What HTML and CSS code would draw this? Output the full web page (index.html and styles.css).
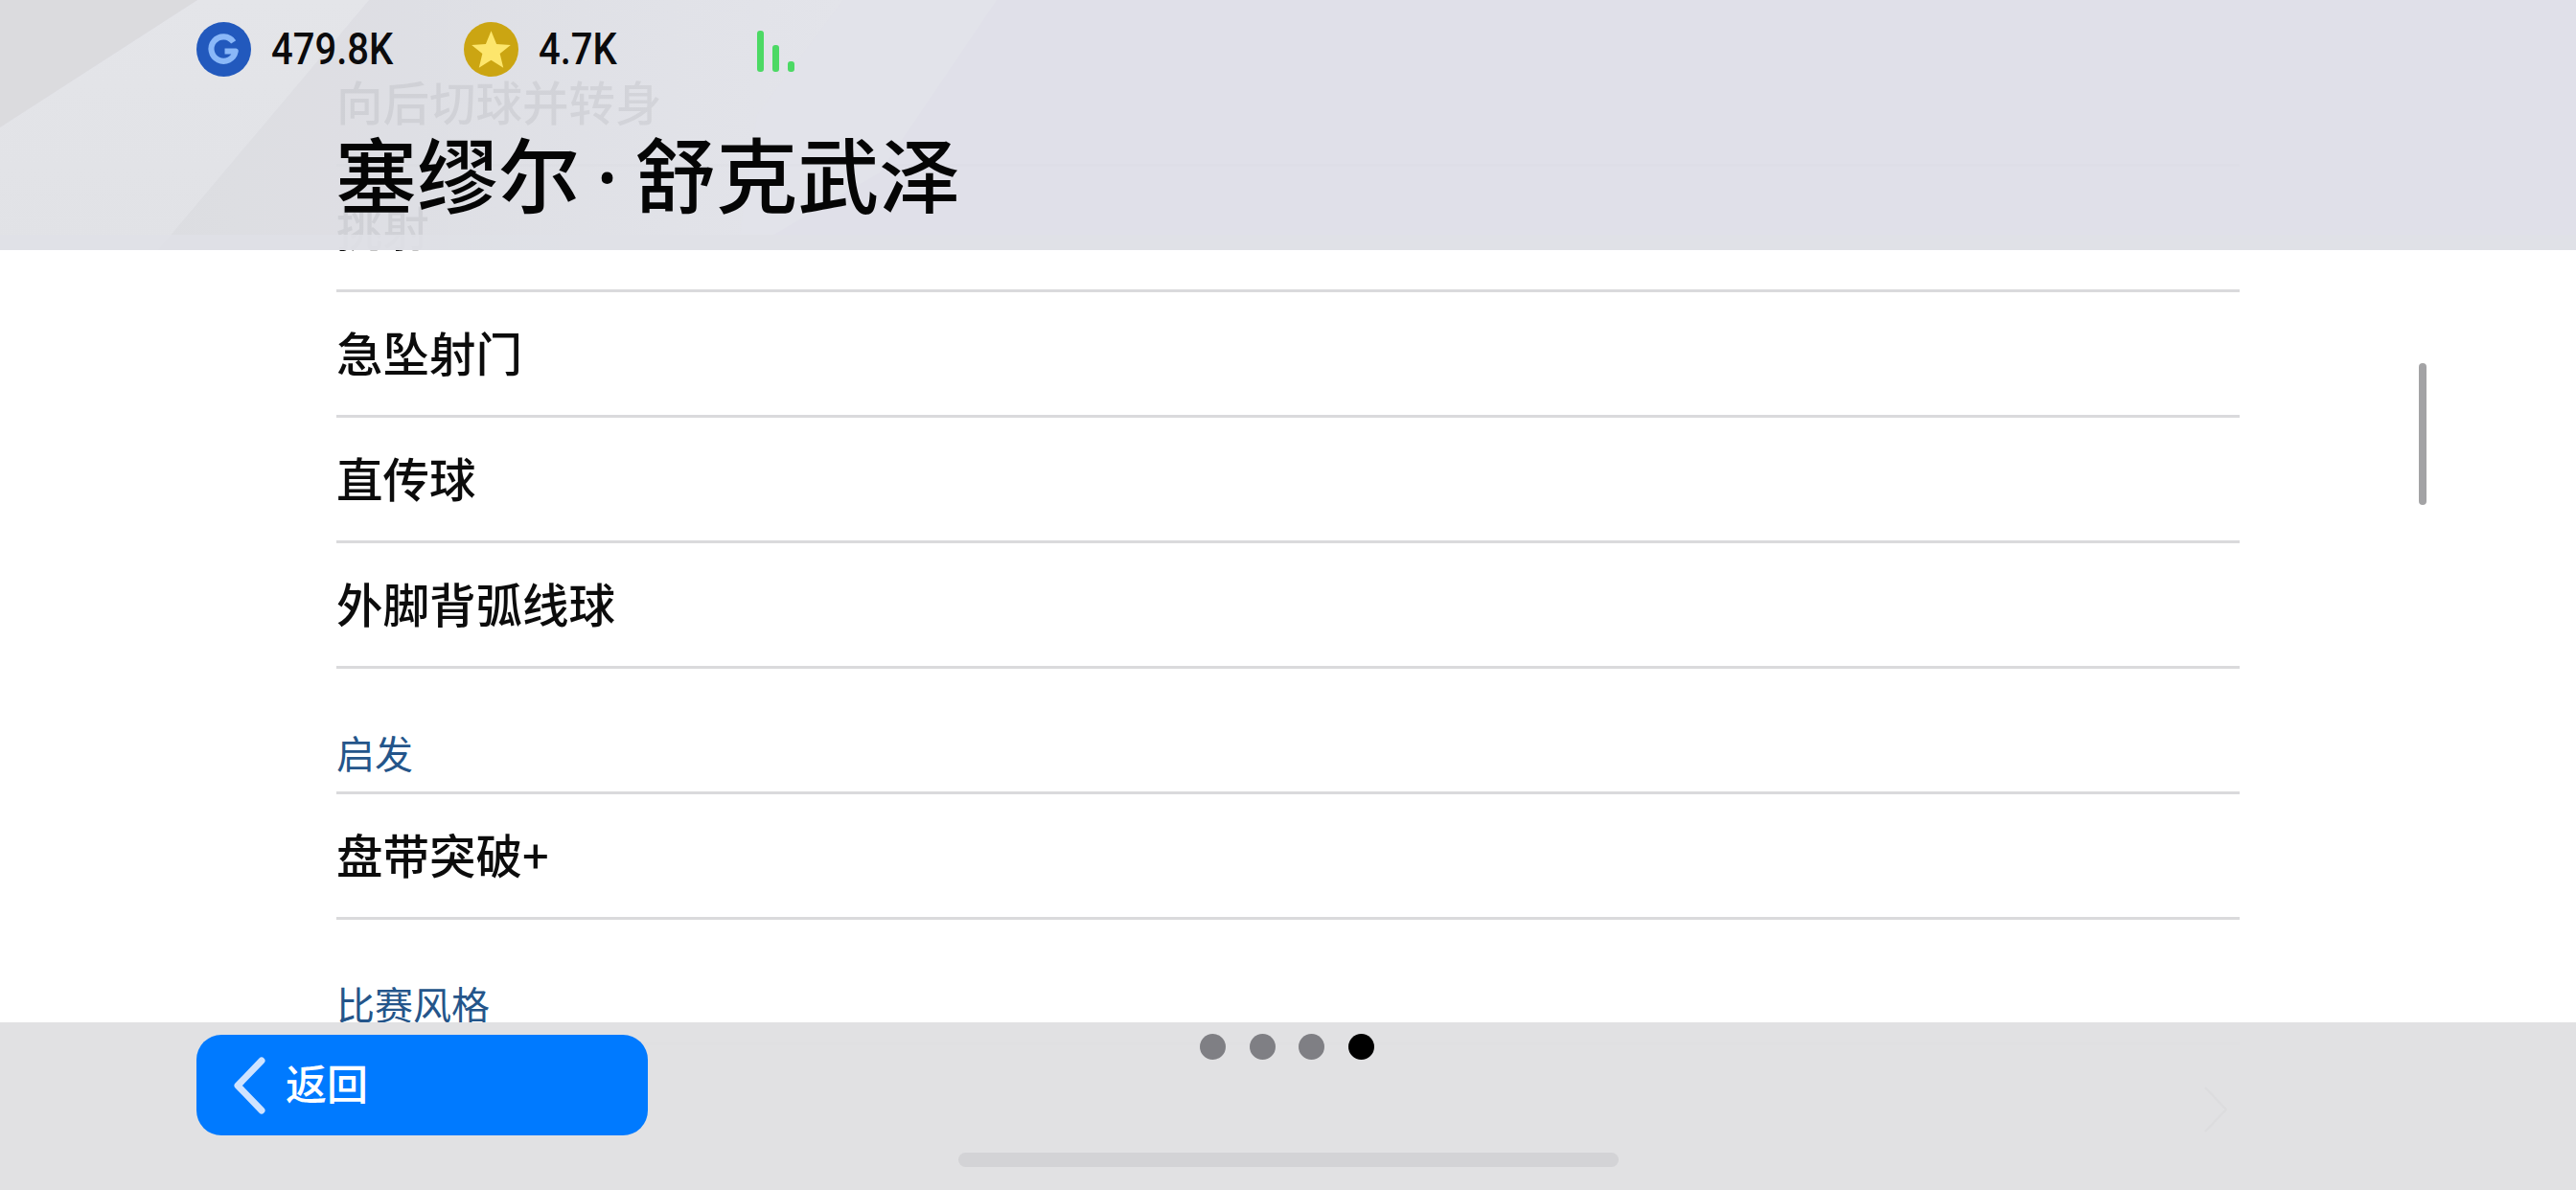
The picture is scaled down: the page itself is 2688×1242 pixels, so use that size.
FILE: index.html
```html
<!DOCTYPE html>
<html lang="zh-CN">
<head>
<meta charset="utf-8">
<title>塞缪尔·舒克武泽</title>
<link rel="stylesheet" href="styles.css">
</head>
<body>
<div class="app">
  <main class="list">
    <div class="row">向后切球并转身</div>
    <div class="row">挑射</div>
    <div class="row">急坠射门</div>
    <div class="row">直传球</div>
    <div class="row">外脚背弧线球</div>
    <div class="row heading">启发</div>
    <div class="row">盘带突破+</div>
    <div class="row heading">比赛风格</div>
  </main>
  <div class="scrollbar"></div>

  <header class="top">
    <svg class="top-bg" viewBox="0 0 2688 261" preserveAspectRatio="none" aria-hidden="true">
      <defs>
        <linearGradient id="mid" x1="0" x2="1" y1="0" y2="0">
          <stop offset="0" stop-color="#dadbe0"/>
          <stop offset="1" stop-color="#e2e3e9"/>
        </linearGradient>
        <linearGradient id="band" x1="0" x2="0" y1="0" y2="1">
          <stop offset="0" stop-color="#e3e4e8"/>
          <stop offset="1" stop-color="#e0e1e5"/>
        </linearGradient>
      </defs>
      <rect width="2688" height="261" fill="#dfdfe8"/>
      <polygon points="160,261 385,0 880,0 790,120 770,261" fill="url(#mid)"/>
      <polygon points="0,133 206,0 385,0 165,261 0,261" fill="url(#band)"/>
      <polygon points="0,0 206,0 0,133" fill="#d9d9dd"/>
      <polygon points="880,0 1040,0 918,180 780,261 770,261 790,120" fill="#e1e2e9"/>
    </svg>
    <div class="stats">
      <div class="stat">
        <svg class="coin" viewBox="0 0 56 56" aria-hidden="true">
          <circle cx="28" cy="28" r="28" fill="#2259bd"/>
          <path d="M38 20.5A12.5 12.5 0 1 0 40 30H29" fill="none" stroke="#8ab8f8" stroke-width="6" stroke-linejoin="round"/>
        </svg>
        <span class="stat-value">479.8K</span>
      </div>
      <div class="stat stat-gold">
        <svg class="coin" viewBox="0 0 56 56" aria-hidden="true">
          <circle cx="28" cy="28" r="28" fill="#cba512"/>
          <polygon points="28,9 33.5,22.5 48,23.5 37,32.5 40.5,47 28,39 15.5,47 19,32.5 8,23.5 22.500,22.500" fill="#fde66c"/>
        </svg>
        <span class="stat-value">4.7K</span>
      </div>
      <div class="signal" aria-hidden="true">
        <span class="bar bar-1"></span>
        <span class="bar bar-2"></span>
        <span class="bar bar-3"></span>
      </div>
    </div>
    <h1 class="title">塞缪尔<span class="title-dot">·</span>舒克武泽</h1>
  </header>

  <footer class="bottom">
    <button class="back" type="button">
      <svg class="back-icon" viewBox="0 0 34 60" aria-hidden="true">
        <path d="M30 4 5 30 30 56" fill="none" stroke="#cfe3ff" stroke-width="7" stroke-linecap="round" stroke-linejoin="round"/>
      </svg>
      <span>返回</span>
    </button>
    <div class="dots" aria-hidden="true">
      <span class="dot"></span>
      <span class="dot"></span>
      <span class="dot"></span>
      <span class="dot dot-on"></span>
    </div>
    <svg class="next" viewBox="0 0 28 50" aria-hidden="true">
      <path d="M3 2 25 25 3 48" fill="none" stroke="#dcdcde" stroke-width="2"/>
    </svg>
    <div class="home"></div>
  </footer>
</div>
</body>
</html>
```
FILE: styles.css
```css
* { box-sizing: border-box; }
html, body { margin: 0; padding: 0; }
body {
  width: 2688px;
  height: 1242px;
  overflow: hidden;
  background: #fff;
  font-family: "Noto Sans CJK SC", "Noto Sans", sans-serif;
}
.app {
  position: relative;
  width: 2688px;
  height: 1242px;
  overflow: hidden;
  background: #fff;
}
.list {
  width: 1986px;
  margin-left: 351px;
  padding-top: 43px;
}
.row {
  height: 131px;
  padding-top: 30px;
  border-bottom: 3px solid #dadadc;
  font-size: 48.5px;
  line-height: 64px;
  font-weight: 500;
  color: #0c0c0c;
}
.row.heading {
  padding-top: 59px;
  font-size: 40px;
  line-height: 56px;
  font-weight: 400;
  color: #24558a;
}
.scrollbar {
  position: absolute;
  left: 2524px;
  top: 379px;
  width: 8px;
  height: 148px;
  border-radius: 4px;
  background: #a3a3a5;
}

/* Translucent header: the scrolled list shows faintly through it */
.top {
  position: absolute;
  left: 0;
  top: 0;
  width: 100%;
  height: 261px;
  padding: 23px 0 0 205px;
}
.top::before {
  content: "";
  position: absolute;
  left: 0;
  right: 0;
  bottom: 0;
  z-index: 1;
  height: 16px;
  background: rgba(223, 224, 230, .85);
}
.top-bg {
  position: absolute;
  inset: 0;
  width: 100%;
  height: 100%;
  opacity: .94;
}
.stats {
  position: relative;
  display: flex;
  align-items: center;
  height: 57px;
}
.stat {
  display: flex;
  align-items: center;
  gap: 21px;
  width: 279px;
}
.stat-gold { width: 306px; }
.coin {
  width: 57px;
  height: 57px;
  flex: none;
}
.stat-value {
  font-family: Roboto, "Liberation Sans", sans-serif;
  font-size: 40px;
  font-weight: 500;
  line-height: 57px;
  color: #0b0b0d;
  transform: scaleY(1.14);
}
.signal {
  display: flex;
  align-items: flex-end;
  gap: 9px;
  height: 43px;
  margin-top: 3px;
}
.bar {
  width: 7px;
  border-radius: 3px;
  background: #4cd964;
}
.bar-1 { height: 43px; }
.bar-2 { height: 28px; }
.bar-3 { height: 11px; }
.title {
  position: relative;
  z-index: 2;
  margin: 39px 0 0 145px;
  font-size: 85px;
  line-height: 120px;
  font-weight: 500;
  color: #050505;
  white-space: nowrap;
}
.title-dot {
  font-family: "Noto Sans", sans-serif;
  padding: 0 17px;
}

.bottom {
  position: absolute;
  left: 0;
  right: 0;
  top: 1067px;
  bottom: 0;
  background: rgba(224, 224, 226, .97);
}
.back {
  position: absolute;
  left: 205px;
  top: 13px;
  display: flex;
  align-items: center;
  gap: 21px;
  width: 471px;
  height: 105px;
  padding: 0 0 8px 38px;
  border: 0;
  border-radius: 26px;
  background: #007aff;
  color: #fff;
  font: 500 43px/56px "Noto Sans CJK SC", sans-serif;
}
.back-icon {
  width: 34px;
  height: 60px;
  flex: none;
  margin-top: 8px;
}
.dots {
  position: absolute;
  left: 1252px;
  top: 12px;
  display: flex;
  gap: 24.500px;
}
.dot {
  width: 27px;
  height: 27px;
  border-radius: 50%;
  background: #7f7f84;
}
.dot-on { background: #000; }
.next {
  position: absolute;
  left: 2298px;
  top: 66px;
  width: 28px;
  height: 50px;
}
.home {
  position: absolute;
  left: 1000px;
  top: 136px;
  width: 689px;
  height: 15px;
  border-radius: 8px;
  background: #d3d3d6;
}
```
